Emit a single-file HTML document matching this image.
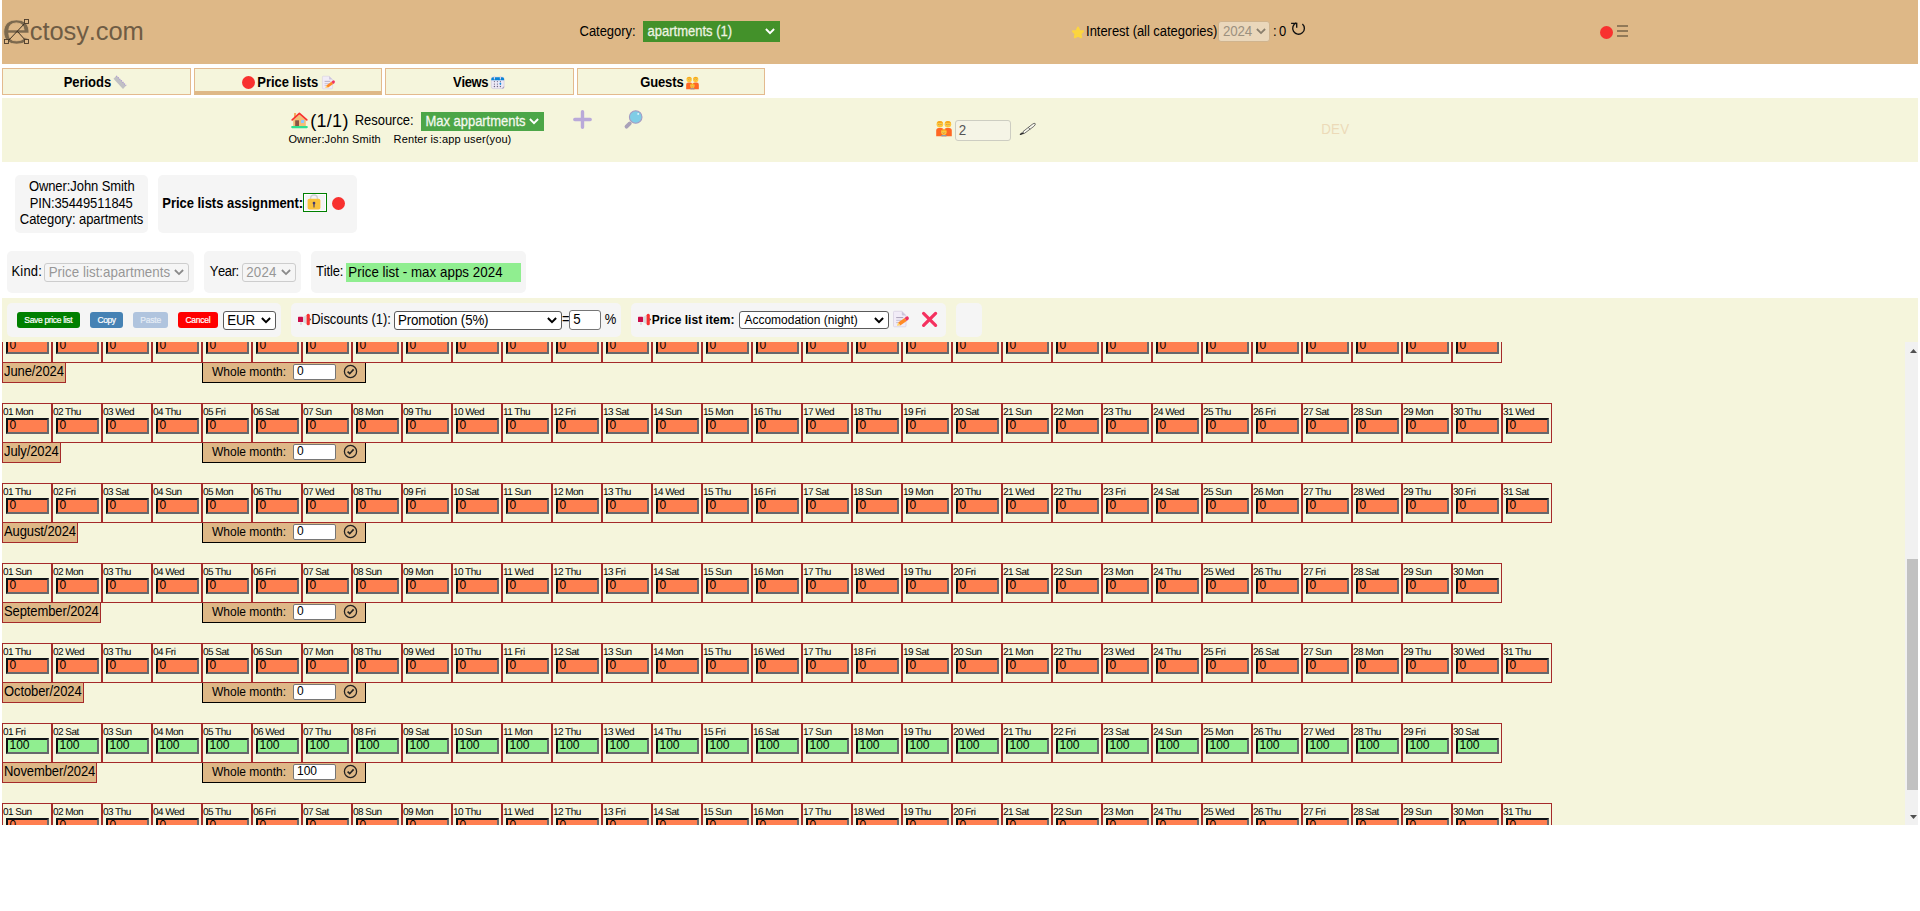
<!DOCTYPE html>
<html lang="en"><head><meta charset="utf-8"><title>ectosy.com - Price lists</title>
<style>
html,body{margin:0;padding:0;background:#fff;}
body{width:1920px;height:911px;overflow:hidden;position:relative;font-family:"Liberation Sans",Arial,sans-serif;font-size:13px;color:#000;}
.b{position:absolute;box-sizing:border-box;}
.t{position:absolute;white-space:pre;display:block;}
svg{position:absolute;overflow:visible;}
#scroll{position:absolute;left:2px;top:342px;width:1916px;height:483px;overflow:hidden;background:#f5f5dc;}
.row{position:absolute;left:0;height:61px;width:1600px;}
.c{position:absolute;top:0;width:50px;height:40px;box-sizing:border-box;border:1px solid #a52a2a;}
.c b{position:absolute;left:-0.1px;top:3px;font-weight:normal;font-size:10px;line-height:11px;letter-spacing:-0.52px;text-rendering:geometricPrecision;white-space:pre;}
.c i{position:absolute;left:3px;top:14px;width:43px;height:16px;box-sizing:border-box;border:2px solid;border-color:#0d1114 #66686c #66686c #0d1114;background:#ff7f50;font-style:normal;font-size:12px;line-height:11px;padding-left:1.5px;overflow:hidden;white-space:pre;}
.c.g i{background:#90ee90;}
.ml{position:absolute;left:0;top:39px;height:21px;box-sizing:border-box;border:1px solid #a52a2a;background:#deb887;font-size:13px;line-height:18px;padding:0 1px 0 1px;letter-spacing:-0.1px;white-space:pre;}
.ml span{display:inline-block;transform:scaleY(1.075);transform-origin:0 13.5px;}
.wm{position:absolute;left:200px;top:40px;width:164px;height:20px;box-sizing:border-box;border:1px solid #000;border-top:none;background:#deb887;}
.wm .l{position:absolute;left:9px;top:2px;font-size:12px;line-height:14px;white-space:pre;}
.wm .v{position:absolute;left:90px;top:1px;width:43px;height:16px;box-sizing:border-box;border:1px solid #767676;border-radius:2px;background:#fff;font-size:12px;line-height:13px;padding-left:3px;white-space:pre;overflow:hidden;}
.wm svg{left:140px;top:1px;}
</style></head><body>

<div class="b" style="left:2px;top:0px;width:1916px;height:64px;background:#deb887;"></div>
<svg style="left:3px;top:18px" width="30" height="30" viewBox="0 0 30 30">
<text transform="translate(-1.45 25.5) scale(1.22 1)" font-family='"Liberation Sans",Arial,sans-serif' font-size="44" fill="#7c694e" stroke="#deb887" stroke-width="0.6">e</text>
<g stroke="#2a2118" stroke-width="0.9" fill="none"><path d="M4.5 23.5L23.5 3.5M14.5 13.5L23.5 23.5"/></g>
<g stroke="#4a3b2a" stroke-width="0.9" fill="#deb887"><rect x="21.5" y="1.5" width="4" height="4"/><rect x="1.5" y="21.5" width="4" height="4"/><rect x="21.5" y="21.5" width="4" height="4"/></g>
</svg>
<span class="t" style="top:17px;font-size:25.5px;line-height:28px;height:28px;color:#6f5c44;left:29.72px;letter-spacing:-0.089px;font-kerning:none;">ctosy.com</span>
<span class="t" style="top:24px;font-size:13px;line-height:15px;height:15px;color:#000;left:579.59px;transform:scaleY(1.075);transform-origin:0 12px;letter-spacing:-0.045px;font-kerning:none;">Category:</span>
<div class="b" style="left:643px;top:21px;width:137px;height:21px;background:#43912a;"></div>
<span class="t" style="top:24px;font-size:13px;line-height:15px;height:15px;color:#eef4e2;left:647.55px;transform:scaleY(1.075);transform-origin:0 12px;-webkit-text-stroke:0.25px #eef4e2;letter-spacing:-0.002px;font-kerning:none;">apartments (1)</span>
<svg style="left:765px;top:28px" width="10" height="7" viewBox="0 0 10 7"><path d="M0.9 1L5 5.1L9.1 1" fill="none" stroke="#fff" stroke-width="1.9"/></svg>
<svg style="left:1071px;top:26px" width="14" height="13" viewBox="0 0 14 13"><path d="M7 1.6L8.5 4.9L12.1 5.3L9.5 7.8L10.2 11.3L7 9.6L3.8 11.3L4.5 7.8L1.9 5.3L5.5 4.9Z" fill="#fcd53f" stroke="#fcd53f" stroke-width="2" stroke-linejoin="round"/></svg>
<span class="t" style="top:24px;font-size:13px;line-height:15px;height:15px;color:#000;left:1086.1px;transform:scaleY(1.075);transform-origin:0 12px;letter-spacing:-0.046px;font-kerning:none;">Interest (all categories)</span>
<div class="b" style="left:1218px;top:21px;width:52px;height:21px;background:#ead7bb;border:1px solid #d0b48e;border-radius:3px;"></div>
<span class="t" style="top:24px;font-size:13.33px;line-height:15px;height:15px;color:#9c917f;left:1222.93px;transform:scaleY(1.05);transform-origin:0 12px;letter-spacing:-0.164px;font-kerning:none;">2024</span>
<svg style="left:1256px;top:28px" width="10" height="7" viewBox="0 0 10 7"><path d="M0.9 1L5 5.1L9.1 1" fill="none" stroke="#8a7f6d" stroke-width="1.8"/></svg>
<span class="t" style="top:24px;font-size:13px;line-height:15px;height:15px;color:#000;left:1273.01px;transform:scaleY(1.075);transform-origin:0 12px;letter-spacing:0.762px;font-kerning:none;">:</span>
<span class="t" style="top:24px;font-size:13px;line-height:15px;height:15px;color:#000;left:1279.09px;transform:scaleY(1.075);transform-origin:0 12px;letter-spacing:0.086px;font-kerning:none;">0</span>
<svg style="left:1290px;top:22px" width="17" height="15" viewBox="0 0 17 15"><path d="M12.4 1.95A5.85 5.85 0 1 1 6.3 0.95" fill="none" stroke="#111" stroke-width="1.35"/><path d="M1.1 1.4H6.7V5.8" fill="none" stroke="#111" stroke-width="1.35"/></svg>
<div class="b" style="left:1600px;top:26px;width:13px;height:13px;background:#f8312f;border-radius:50%;"></div>
<div class="b" style="left:1617px;top:25px;width:11px;height:2px;background:#917958;"></div>
<div class="b" style="left:1617px;top:30px;width:11px;height:2px;background:#917958;"></div>
<div class="b" style="left:1617px;top:35px;width:11px;height:2px;background:#917958;"></div>
<div class="b" style="left:2px;top:68px;width:189px;height:27px;background:#f5f5dc;border:1px solid #e3ba8e;"></div>
<div class="b" style="left:194px;top:68px;width:188px;height:27px;background:#f5f5dc;border:1px solid #e3ba8e;border-bottom:4px solid #deb887;"></div>
<div class="b" style="left:385px;top:68px;width:189px;height:27px;background:#f5f5dc;border:1px solid #e3ba8e;"></div>
<div class="b" style="left:577px;top:68px;width:188px;height:27px;background:#f5f5dc;border:1px solid #e3ba8e;"></div>
<span class="t" style="top:75px;font-size:13px;line-height:15px;height:15px;color:#000;font-weight:bold;left:63.63px;transform:scaleY(1.075);transform-origin:0 12px;letter-spacing:-0.030px;font-kerning:none;">Periods</span>
<svg style="left:112px;top:74px" width="16" height="16" viewBox="0 0 16 16"><path d="M4.4 1.8L14.2 11.5L11 15L1.5 4.7Z" fill="#c0c0c4"/><path d="M4.4 1.8L14.2 11.5" stroke="#a98fd4" stroke-width="1.1" stroke-dasharray="1.1 1.1"/></svg>
<div class="b" style="left:242px;top:76px;width:13px;height:13px;background:#f8312f;border-radius:50%;"></div>
<span class="t" style="top:75px;font-size:13px;line-height:15px;height:15px;color:#000;font-weight:bold;left:257.33px;transform:scaleY(1.075);transform-origin:0 12px;letter-spacing:-0.062px;font-kerning:none;">Price lists</span>
<svg style="left:321.8px;top:76px" width="13" height="13" viewBox="0 0 16 16"><path d="M0.5 1.2Q0.5 0.3 1.4 0.3H8.8L13 4.4V15Q13 15.8 12.2 15.8H1.4Q0.5 15.8 0.5 15Z" fill="#f1ecf7" stroke="#d6cfe1" stroke-width="0.7"/><path d="M8.8 0.3V3.6Q8.8 4.4 9.6 4.4H13Z" fill="#cdc5db"/><path d="M3.2 6.6H10.2" stroke="#a9a0b8" stroke-width="1"/><path d="M3.2 9.3H8.6M3.2 11.6H5.8" stroke="#c4bcd2" stroke-width="1"/><path d="M5.2 11.6L11.6 7L13.7 9.9L7.2 14.4Z" fill="#ff8a26"/><path d="M3.9 14.8L5.2 11.6L7.2 14.4Z" fill="#ffd46a"/><path d="M11.6 7L13.2 5.7Q14.6 4.8 15.6 6.3Q16.4 7.8 15.2 8.8L13.7 9.9Z" fill="#f0325f"/></svg>
<span class="t" style="top:75px;font-size:13px;line-height:15px;height:15px;color:#000;font-weight:bold;left:453.11px;transform:scaleY(1.075);transform-origin:0 12px;letter-spacing:-0.358px;font-kerning:none;">Views</span>
<svg style="left:491px;top:76px" width="14" height="13" viewBox="0 0 14 13"><rect x="0.3" y="1.2" width="12.8" height="11.4" rx="1.8" fill="#ece8f5" stroke="#cbc5da" stroke-width="0.6"/><path d="M0.3 3A1.8 1.8 0 0 1 2.1 1.2H11.3A1.8 1.8 0 0 1 13.1 3V4.3H0.3Z" fill="#0a84d6"/><path d="M3.4 0.2V2.9M9.4 0.2V2.9" stroke="#ddd6ea" stroke-width="1.1" stroke-linecap="round"/><g fill="#6c6480"><circle cx="3.4" cy="5.6" r="0.6"/><circle cx="6.4" cy="5.6" r="0.6"/><circle cx="9.4" cy="5.6" r="0.6"/><circle cx="3.4" cy="8.1" r="0.6"/><circle cx="6.4" cy="8.1" r="0.6"/><circle cx="3.4" cy="10.5" r="0.7"/><circle cx="6.4" cy="10.5" r="0.7"/><circle cx="9.4" cy="10.5" r="0.7"/></g><rect x="8.7" y="6.6" width="1.4" height="2.4" rx="0.7" fill="#1c8fe0"/><path d="M10.6 12.6L13.1 10.2V11A1.6 1.6 0 0 1 11.5 12.6Z" fill="#a69cbc"/></svg>
<span class="t" style="top:75px;font-size:13px;line-height:15px;height:15px;color:#000;font-weight:bold;left:640.17px;transform:scaleY(1.075);transform-origin:0 12px;letter-spacing:-0.121px;font-kerning:none;">Guests</span>
<svg style="left:686px;top:76px" width="13" height="13.4" viewBox="0 0 16 16.4"><path d="M0.2 16.2V10.6A2.6 2.6 0 0 1 2.8 8H5.2A2.6 2.6 0 0 1 7.8 10.6V16.2Z" fill="#ff6723"/><path d="M8.2 16.2V10.6A2.6 2.6 0 0 1 10.8 8H13.2A2.6 2.6 0 0 1 15.8 10.6V16.2Z" fill="#ff6723"/><rect x="6" y="10" width="4" height="6.2" fill="#ff6723"/><circle cx="3.9" cy="4.3" r="3.3" fill="#ffc83d"/><circle cx="11.9" cy="4.3" r="3.3" fill="#ffc83d"/><path d="M0.75 3.4A3.3 3.3 0 0 1 7.05 3.4Q5.5 2.5 3.9 3Q2.3 2.5 0.75 3.4Z" fill="#f5a31a"/><path d="M8.75 3.4A3.3 3.3 0 0 1 15.05 3.4Q13.5 2.5 11.9 3Q10.3 2.5 8.75 3.4Z" fill="#f5a31a"/><circle cx="7.9" cy="12.1" r="2.8" fill="#ffc83d"/><path d="M5.3 11.2A2.8 2.8 0 0 1 10.5 11.2Q7.9 9.9 5.3 11.2Z" fill="#f5a31a"/><path d="M5 16.3Q5 14.9 6.4 14.9H9.4Q10.8 14.9 10.8 16.3Z" fill="#8a9bb0"/><g fill="#8f8272"><circle cx="2.9" cy="4.5" r="0.5"/><circle cx="5" cy="4.5" r="0.5"/><circle cx="10.9" cy="4.5" r="0.5"/><circle cx="13" cy="4.5" r="0.5"/><circle cx="6.9" cy="12.2" r="0.45"/><circle cx="8.9" cy="12.2" r="0.45"/></g><circle cx="7.9" cy="13.5" r="0.5" fill="#d4453a"/><circle cx="3.9" cy="6.1" r="0.45" fill="#e8842c"/><circle cx="11.9" cy="6.1" r="0.45" fill="#e8842c"/></svg>
<div class="b" style="left:2px;top:98px;width:1916px;height:64px;background:#f5f5dc;"></div>
<svg style="left:291px;top:112px" width="17" height="17" viewBox="0 0 17 17"><rect x="3" y="1" width="2.1" height="4.4" rx="0.3" fill="#f3ad61"/><path d="M2.2 8L8.4 2.2L14.8 8V14.4H2.2Z" fill="#f3be78"/><path d="M1.2 7.9L8.4 1.3L15.8 7.9" fill="none" stroke="#f8312f" stroke-width="1.7" stroke-linecap="round" stroke-linejoin="round"/><rect x="4.2" y="8.3" width="3.8" height="6" fill="#8c5543"/><rect x="10" y="8" width="3.1" height="3.1" rx="0.4" fill="#8cc8ff"/><path d="M1.2 15.1H15.8" stroke="#2fe08f" stroke-width="2.1" stroke-linecap="round"/></svg>
<span class="t" style="top:111px;font-size:18px;line-height:20px;height:20px;color:#000;left:310.28px;letter-spacing:0.280px;font-kerning:none;">(1/1)</span>
<span class="t" style="top:113px;font-size:13px;line-height:15px;height:15px;color:#000;left:354.63px;transform:scaleY(1.075);transform-origin:0 12px;letter-spacing:-0.024px;font-kerning:none;">Resource:</span>
<div class="b" style="left:421px;top:112px;width:123px;height:19px;background:#4ca648;"></div>
<span class="t" style="top:114px;font-size:13px;line-height:15px;height:15px;color:#f4f8ee;left:425.53px;transform:scaleY(1.075);transform-origin:0 12px;-webkit-text-stroke:0.25px #f4f8ee;letter-spacing:-0.035px;font-kerning:none;">Max appartments</span>
<svg style="left:529px;top:118px" width="10" height="7" viewBox="0 0 10 7"><path d="M0.9 1L5 5.1L9.1 1" fill="none" stroke="#fff" stroke-width="1.9"/></svg>
<span class="t" style="top:133px;font-size:11px;line-height:12px;height:12px;color:#000;left:288.38px;letter-spacing:0.124px;font-kerning:none;">Owner:John Smith</span>
<span class="t" style="top:133px;font-size:11px;line-height:12px;height:12px;color:#000;left:393.6px;letter-spacing:0.125px;font-kerning:none;">Renter is:app user(you)</span>
<svg style="left:573px;top:110px" width="19" height="19" viewBox="0 0 19 19"><path d="M9.5 1.8V17.2M1.8 9.5H17.2" stroke="#b9a9d9" stroke-width="3.4" stroke-linecap="round"/></svg>
<svg style="left:624px;top:109px" width="20" height="20" viewBox="0 0 20 20"><path d="M2.5 17.7L5.8 14.4" stroke="#a9a1b8" stroke-width="3.8" stroke-linecap="round"/><circle cx="11.7" cy="8" r="6.3" fill="#7fcde6" stroke="#a79bc2" stroke-width="1.1"/><circle cx="14.2" cy="4.9" r="0.9" fill="#e8f7fc"/></svg>
<svg style="left:936.4px;top:120px" width="16" height="16.4" viewBox="0 0 16 16.4"><path d="M0.2 16.2V10.6A2.6 2.6 0 0 1 2.8 8H5.2A2.6 2.6 0 0 1 7.8 10.6V16.2Z" fill="#ff6723"/><path d="M8.2 16.2V10.6A2.6 2.6 0 0 1 10.8 8H13.2A2.6 2.6 0 0 1 15.8 10.6V16.2Z" fill="#ff6723"/><rect x="6" y="10" width="4" height="6.2" fill="#ff6723"/><circle cx="3.9" cy="4.3" r="3.3" fill="#ffc83d"/><circle cx="11.9" cy="4.3" r="3.3" fill="#ffc83d"/><path d="M0.75 3.4A3.3 3.3 0 0 1 7.05 3.4Q5.5 2.5 3.9 3Q2.3 2.5 0.75 3.4Z" fill="#f5a31a"/><path d="M8.75 3.4A3.3 3.3 0 0 1 15.05 3.4Q13.5 2.5 11.9 3Q10.3 2.5 8.75 3.4Z" fill="#f5a31a"/><circle cx="7.9" cy="12.1" r="2.8" fill="#ffc83d"/><path d="M5.3 11.2A2.8 2.8 0 0 1 10.5 11.2Q7.9 9.9 5.3 11.2Z" fill="#f5a31a"/><path d="M5 16.3Q5 14.9 6.4 14.9H9.4Q10.8 14.9 10.8 16.3Z" fill="#8a9bb0"/><g fill="#8f8272"><circle cx="2.9" cy="4.5" r="0.5"/><circle cx="5" cy="4.5" r="0.5"/><circle cx="10.9" cy="4.5" r="0.5"/><circle cx="13" cy="4.5" r="0.5"/><circle cx="6.9" cy="12.2" r="0.45"/><circle cx="8.9" cy="12.2" r="0.45"/></g><circle cx="7.9" cy="13.5" r="0.5" fill="#d4453a"/><circle cx="3.9" cy="6.1" r="0.45" fill="#e8842c"/><circle cx="11.9" cy="6.1" r="0.45" fill="#e8842c"/></svg>
<div class="b" style="left:955px;top:120px;width:56px;height:21px;background:#f5f4e6;border:1px solid #cdcdc2;border-radius:3px;"></div>
<span class="t" style="top:123px;font-size:13.33px;line-height:15px;height:15px;color:#545454;left:958.83px;transform:scaleY(1.05);transform-origin:0 12px;letter-spacing:0.827px;font-kerning:none;">2</span>
<svg style="left:1019px;top:121px" width="18" height="16" viewBox="0 0 18 16"><path d="M1.1 13.5L4 10.6L13.2 3.4Q15.4 1.6 16.2 2.6Q16.8 3.6 14.8 5.4L5.4 12.4Z" fill="#fafaf0" stroke="#333" stroke-width="0.7" stroke-linejoin="round"/><path d="M1.1 13.5L4.8 11.8" stroke="#222" stroke-width="1.2"/><path d="M9.3 6.6L11.2 8.3" stroke="#333" stroke-width="0.7"/></svg>
<span class="t" style="top:122px;font-size:13.33px;line-height:15px;height:15px;color:#ecdab8;left:1321.31px;transform:scaleY(1.05);transform-origin:0 12px;letter-spacing:0.172px;font-kerning:none;">DEV</span>
<div class="b" style="left:15px;top:175px;width:133px;height:58px;background:#f5f5f5;border-radius:5px;"></div>
<span class="t" style="top:179px;font-size:13px;line-height:15px;height:15px;color:#000;left:28.88px;transform:scaleY(1.075);transform-origin:0 12px;letter-spacing:-0.078px;font-kerning:none;">Owner:John Smith</span>
<span class="t" style="top:196px;font-size:13px;line-height:15px;height:15px;color:#000;left:29.63px;transform:scaleY(1.075);transform-origin:0 12px;letter-spacing:-0.114px;font-kerning:none;">PIN:35449511845</span>
<span class="t" style="top:212px;font-size:13px;line-height:15px;height:15px;color:#000;left:19.84px;transform:scaleY(1.075);transform-origin:0 12px;letter-spacing:-0.078px;font-kerning:none;">Category: apartments</span>
<div class="b" style="left:158px;top:175px;width:199px;height:58px;background:#f5f5f5;border-radius:5px;"></div>
<span class="t" style="top:196px;font-size:13px;line-height:15px;height:15px;color:#000;font-weight:bold;left:162.33px;transform:scaleY(1.075);transform-origin:0 12px;letter-spacing:-0.036px;font-kerning:none;">Price lists assignment:</span>
<div class="b" style="left:303px;top:193px;width:24px;height:19px;background:#f4f3f5;border:1px solid #008000;box-shadow:inset 0 0 0 1px #fff;"></div>
<svg style="left:307.4px;top:193.4px" width="14" height="17" viewBox="0 0 14 17"><path d="M3.6 7V5.4A3.4 3.4 0 0 1 10.4 5.4V7" fill="none" stroke="#d0d0d4" stroke-width="1.3"/><rect x="0.6" y="5.7" width="12.8" height="10.9" rx="1.8" fill="#f9c23c"/><circle cx="7" cy="10" r="1.35" fill="#3f3a72"/><path d="M6.3 10.3H7.7L7.5 14.6H6.5Z" fill="#3f3a72"/></svg>
<div class="b" style="left:332px;top:197px;width:13px;height:13px;background:#f8312f;border-radius:50%;"></div>
<div class="b" style="left:7px;top:251px;width:187px;height:42px;background:#f5f5f5;border-radius:5px;"></div>
<span class="t" style="top:264px;font-size:13px;line-height:15px;height:15px;color:#000;left:11.53px;transform:scaleY(1.075);transform-origin:0 12px;letter-spacing:0.156px;font-kerning:none;">Kind:</span>
<div class="b" style="left:44px;top:263px;width:145px;height:19px;background:#f5f5f5;border:1px solid #cdcdcd;border-radius:3px;"></div>
<span class="t" style="top:265px;font-size:13.33px;line-height:15px;height:15px;color:#979797;left:48.71px;transform:scaleY(1.05);transform-origin:0 12px;letter-spacing:0.031px;font-kerning:none;">Price list:apartments</span>
<svg style="left:174.2px;top:269px" width="10" height="7" viewBox="0 0 10 7"><path d="M0.9 1L5 5.1L9.1 1" fill="none" stroke="#8a8a8a" stroke-width="1.8"/></svg>
<div class="b" style="left:204px;top:251px;width:97px;height:42px;background:#f5f5f5;border-radius:5px;"></div>
<span class="t" style="top:264px;font-size:13px;line-height:15px;height:15px;color:#000;left:209.71px;transform:scaleY(1.075);transform-origin:0 12px;letter-spacing:-0.400px;font-kerning:none;">Year:</span>
<div class="b" style="left:242px;top:263px;width:54px;height:19px;background:#f5f5f5;border:1px solid #cdcdcd;border-radius:3px;"></div>
<span class="t" style="top:265px;font-size:13.33px;line-height:15px;height:15px;color:#979797;left:246.23px;transform:scaleY(1.05);transform-origin:0 12px;letter-spacing:0.202px;font-kerning:none;">2024</span>
<svg style="left:281.2px;top:269px" width="10" height="7" viewBox="0 0 10 7"><path d="M0.9 1L5 5.1L9.1 1" fill="none" stroke="#8a8a8a" stroke-width="1.8"/></svg>
<div class="b" style="left:311px;top:251px;width:215px;height:42px;background:#f5f5f5;border-radius:5px;"></div>
<span class="t" style="top:264px;font-size:13px;line-height:15px;height:15px;color:#000;left:316.01px;transform:scaleY(1.075);transform-origin:0 12px;letter-spacing:-0.138px;font-kerning:none;">Title:</span>
<div class="b" style="left:346px;top:263px;width:175px;height:19px;background:#90ee90;"></div>
<span class="t" style="top:265px;font-size:13.33px;line-height:15px;height:15px;color:#000;left:348.31px;transform:scaleY(1.05);transform-origin:0 12px;letter-spacing:0.037px;font-kerning:none;">Price list - max apps 2024</span>
<div class="b" style="left:2px;top:298px;width:1916px;height:44px;background:#f5f5dc;"></div>
<div class="b" style="left:7px;top:303px;width:274px;height:34px;background:#f5f5f5;border-radius:5px;"></div>
<div class="b" style="left:17px;top:312px;width:63px;height:16px;background:#008000;border-radius:3px;"></div>
<span class="t" style="top:315px;font-size:8.5px;line-height:10px;height:10px;color:#fff;left:24.31px;-webkit-text-stroke:0.2px #fff;letter-spacing:-0.326px;font-kerning:none;">Save price list</span>
<div class="b" style="left:90px;top:312px;width:33px;height:16px;background:#4682b4;border-radius:3px;"></div>
<span class="t" style="top:315px;font-size:8.5px;line-height:10px;height:10px;color:#fff;left:97.47px;-webkit-text-stroke:0.2px #fff;letter-spacing:-0.465px;font-kerning:none;">Copy</span>
<div class="b" style="left:133px;top:312px;width:35px;height:16px;background:#b0c4de;border-radius:3px;"></div>
<span class="t" style="top:315px;font-size:8.5px;line-height:10px;height:10px;color:#e6edf6;left:140.2px;-webkit-text-stroke:0.2px #e6edf6;letter-spacing:-0.190px;font-kerning:none;">Paste</span>
<div class="b" style="left:178px;top:312px;width:40px;height:16px;background:#ff0000;border-radius:3px;"></div>
<span class="t" style="top:315px;font-size:8.5px;line-height:10px;height:10px;color:#fff;left:185.47px;-webkit-text-stroke:0.2px #fff;letter-spacing:-0.272px;font-kerning:none;">Cancel</span>
<div class="b" style="left:223px;top:311px;width:53px;height:19px;background:#fff;border:1px solid #5a5a5a;border-radius:3px;"></div>
<span class="t" style="top:313px;font-size:13.33px;line-height:15px;height:15px;color:#000;left:227.31px;transform:scaleY(1.05);transform-origin:0 12px;letter-spacing:-0.166px;font-kerning:none;">EUR</span>
<svg style="left:261px;top:317px" width="10" height="7" viewBox="0 0 10 7"><path d="M0.9 1L5 5.1L9.1 1" fill="none" stroke="#000" stroke-width="2"/></svg>
<div class="b" style="left:291px;top:303px;width:330px;height:34px;background:#f5f5f5;border-radius:5px;"></div>
<svg style="left:298px;top:314px" width="14" height="12" viewBox="0 0 14 12"><rect x="0" y="2.8" width="5" height="5.3" rx="0.6" fill="#ca0b4a"/><path d="M5 2.9L8.7 0.9V10.1L5 8Z" fill="#d9d9dc"/><rect x="2" y="8.2" width="2" height="2.6" rx="0.6" fill="#dcdcde"/><rect x="8.6" y="-0.2" width="3.2" height="11.4" rx="1.5" fill="#f92f2f"/><path d="M11.7 3.9L13.2 5.4L11.7 6.9Z" fill="#433b3b"/></svg>
<span class="t" style="top:312px;font-size:13px;line-height:15px;height:15px;color:#000;left:311.23px;transform:scaleY(1.075);transform-origin:0 12px;letter-spacing:-0.049px;font-kerning:none;">Discounts (1):</span>
<div class="b" style="left:394px;top:311px;width:168px;height:19px;background:#fff;border:1px solid #5a5a5a;border-radius:3px;"></div>
<span class="t" style="top:313px;font-size:13.33px;line-height:15px;height:15px;color:#000;left:398.01px;transform:scaleY(1.05);transform-origin:0 12px;letter-spacing:-0.160px;font-kerning:none;">Promotion (5%)</span>
<svg style="left:546.5px;top:317px" width="10" height="7" viewBox="0 0 10 7"><path d="M0.9 1L5 5.1L9.1 1" fill="none" stroke="#000" stroke-width="2"/></svg>
<span class="t" style="top:312px;font-size:13px;line-height:15px;height:15px;color:#000;left:562.07px;transform:scaleY(1.075);transform-origin:0 12px;letter-spacing:-0.316px;font-kerning:none;">=</span>
<div class="b" style="left:569px;top:310px;width:32px;height:20px;background:#fff;border:1px solid #767676;border-radius:3px;"></div>
<span class="t" style="top:312px;font-size:13.33px;line-height:15px;height:15px;color:#000;left:573.27px;transform:scaleY(1.05);transform-origin:0 12px;letter-spacing:0.080px;font-kerning:none;">5</span>
<span class="t" style="top:312px;font-size:13px;line-height:15px;height:15px;color:#000;left:604.64px;transform:scaleY(1.075);transform-origin:0 12px;letter-spacing:-0.432px;font-kerning:none;">%</span>
<div class="b" style="left:631px;top:303px;width:315px;height:34px;background:#f5f5f5;border-radius:5px;"></div>
<svg style="left:638px;top:314px" width="14" height="12" viewBox="0 0 14 12"><rect x="0" y="2.8" width="5" height="5.3" rx="0.6" fill="#ca0b4a"/><path d="M5 2.9L8.7 0.9V10.1L5 8Z" fill="#d9d9dc"/><rect x="2" y="8.2" width="2" height="2.6" rx="0.6" fill="#dcdcde"/><rect x="8.6" y="-0.2" width="3.2" height="11.4" rx="1.5" fill="#f92f2f"/><path d="M11.7 3.9L13.2 5.4L11.7 6.9Z" fill="#433b3b"/></svg>
<span class="t" style="top:313px;font-size:12px;line-height:14px;height:14px;color:#000;font-weight:bold;left:651.8px;letter-spacing:0.042px;font-kerning:none;">Price list item:</span>
<div class="b" style="left:739px;top:311px;width:150px;height:18px;background:#fff;border:1px solid #5a5a5a;border-radius:3px;"></div>
<span class="t" style="top:313px;font-size:12px;line-height:14px;height:14px;color:#000;left:744.38px;letter-spacing:0.004px;font-kerning:none;">Accomodation (night)</span>
<svg style="left:873.5px;top:316.5px" width="10" height="7" viewBox="0 0 10 7"><path d="M0.9 1L5 5.1L9.1 1" fill="none" stroke="#000" stroke-width="2"/></svg>
<svg style="left:893px;top:311px" width="16" height="16" viewBox="0 0 16 16"><path d="M0.5 1.2Q0.5 0.3 1.4 0.3H8.8L13 4.4V15Q13 15.8 12.2 15.8H1.4Q0.5 15.8 0.5 15Z" fill="#f1ecf7" stroke="#d6cfe1" stroke-width="0.7"/><path d="M8.8 0.3V3.6Q8.8 4.4 9.6 4.4H13Z" fill="#cdc5db"/><path d="M3.2 6.6H10.2" stroke="#a9a0b8" stroke-width="1"/><path d="M3.2 9.3H8.6M3.2 11.6H5.8" stroke="#c4bcd2" stroke-width="1"/><path d="M5.2 11.6L11.6 7L13.7 9.9L7.2 14.4Z" fill="#ff8a26"/><path d="M3.9 14.8L5.2 11.6L7.2 14.4Z" fill="#ffd46a"/><path d="M11.6 7L13.2 5.7Q14.6 4.8 15.6 6.3Q16.4 7.8 15.2 8.8L13.7 9.9Z" fill="#f0325f"/></svg>
<svg style="left:921px;top:311px" width="17" height="17" viewBox="0 0 17 17"><path d="M2.6 2.4L14.6 14.4M14.6 2.4L2.6 14.4" stroke="#f5315f" stroke-width="3.2" stroke-linecap="round"/></svg>
<div class="b" style="left:956px;top:303px;width:26px;height:34px;background:#f5f5f5;border-radius:5px;"></div>
<div id="scroll">
<div class="row" style="top:-19px">
<div class="c" style="left:0px"><b>01 Sat</b><i>0</i></div><div class="c" style="left:50px"><b>02 Sun</b><i>0</i></div><div class="c" style="left:100px"><b>03 Mon</b><i>0</i></div><div class="c" style="left:150px"><b>04 Thu</b><i>0</i></div><div class="c" style="left:200px"><b>05 Wed</b><i>0</i></div><div class="c" style="left:250px"><b>06 Thu</b><i>0</i></div><div class="c" style="left:300px"><b>07 Fri</b><i>0</i></div><div class="c" style="left:350px"><b>08 Sat</b><i>0</i></div><div class="c" style="left:400px"><b>09 Sun</b><i>0</i></div><div class="c" style="left:450px"><b>10 Mon</b><i>0</i></div><div class="c" style="left:500px"><b>11 Thu</b><i>0</i></div><div class="c" style="left:550px"><b>12 Wed</b><i>0</i></div><div class="c" style="left:600px"><b>13 Thu</b><i>0</i></div><div class="c" style="left:650px"><b>14 Fri</b><i>0</i></div><div class="c" style="left:700px"><b>15 Sat</b><i>0</i></div><div class="c" style="left:750px"><b>16 Sun</b><i>0</i></div><div class="c" style="left:800px"><b>17 Mon</b><i>0</i></div><div class="c" style="left:850px"><b>18 Thu</b><i>0</i></div><div class="c" style="left:900px"><b>19 Wed</b><i>0</i></div><div class="c" style="left:950px"><b>20 Thu</b><i>0</i></div><div class="c" style="left:1000px"><b>21 Fri</b><i>0</i></div><div class="c" style="left:1050px"><b>22 Sat</b><i>0</i></div><div class="c" style="left:1100px"><b>23 Sun</b><i>0</i></div><div class="c" style="left:1150px"><b>24 Mon</b><i>0</i></div><div class="c" style="left:1200px"><b>25 Thu</b><i>0</i></div><div class="c" style="left:1250px"><b>26 Wed</b><i>0</i></div><div class="c" style="left:1300px"><b>27 Thu</b><i>0</i></div><div class="c" style="left:1350px"><b>28 Fri</b><i>0</i></div><div class="c" style="left:1400px"><b>29 Sat</b><i>0</i></div><div class="c" style="left:1450px"><b>30 Sun</b><i>0</i></div>
<div class="ml"><span>June/2024</span></div>
<div class="wm"><span class="l">Whole month:</span><span class="v">0</span><svg width="15" height="15" viewBox="0 0 15 15"><circle cx="7.5" cy="7.5" r="6.1" fill="none" stroke="#222" stroke-width="1.3"/><path d="M4.6 7.7L6.7 9.7L10.6 5.4" fill="none" stroke="#222" stroke-width="1.6"/></svg></div>
</div>
<div class="row" style="top:61px">
<div class="c" style="left:0px"><b>01 Mon</b><i>0</i></div><div class="c" style="left:50px"><b>02 Thu</b><i>0</i></div><div class="c" style="left:100px"><b>03 Wed</b><i>0</i></div><div class="c" style="left:150px"><b>04 Thu</b><i>0</i></div><div class="c" style="left:200px"><b>05 Fri</b><i>0</i></div><div class="c" style="left:250px"><b>06 Sat</b><i>0</i></div><div class="c" style="left:300px"><b>07 Sun</b><i>0</i></div><div class="c" style="left:350px"><b>08 Mon</b><i>0</i></div><div class="c" style="left:400px"><b>09 Thu</b><i>0</i></div><div class="c" style="left:450px"><b>10 Wed</b><i>0</i></div><div class="c" style="left:500px"><b>11 Thu</b><i>0</i></div><div class="c" style="left:550px"><b>12 Fri</b><i>0</i></div><div class="c" style="left:600px"><b>13 Sat</b><i>0</i></div><div class="c" style="left:650px"><b>14 Sun</b><i>0</i></div><div class="c" style="left:700px"><b>15 Mon</b><i>0</i></div><div class="c" style="left:750px"><b>16 Thu</b><i>0</i></div><div class="c" style="left:800px"><b>17 Wed</b><i>0</i></div><div class="c" style="left:850px"><b>18 Thu</b><i>0</i></div><div class="c" style="left:900px"><b>19 Fri</b><i>0</i></div><div class="c" style="left:950px"><b>20 Sat</b><i>0</i></div><div class="c" style="left:1000px"><b>21 Sun</b><i>0</i></div><div class="c" style="left:1050px"><b>22 Mon</b><i>0</i></div><div class="c" style="left:1100px"><b>23 Thu</b><i>0</i></div><div class="c" style="left:1150px"><b>24 Wed</b><i>0</i></div><div class="c" style="left:1200px"><b>25 Thu</b><i>0</i></div><div class="c" style="left:1250px"><b>26 Fri</b><i>0</i></div><div class="c" style="left:1300px"><b>27 Sat</b><i>0</i></div><div class="c" style="left:1350px"><b>28 Sun</b><i>0</i></div><div class="c" style="left:1400px"><b>29 Mon</b><i>0</i></div><div class="c" style="left:1450px"><b>30 Thu</b><i>0</i></div><div class="c" style="left:1500px"><b>31 Wed</b><i>0</i></div>
<div class="ml"><span>July/2024</span></div>
<div class="wm"><span class="l">Whole month:</span><span class="v">0</span><svg width="15" height="15" viewBox="0 0 15 15"><circle cx="7.5" cy="7.5" r="6.1" fill="none" stroke="#222" stroke-width="1.3"/><path d="M4.6 7.7L6.7 9.7L10.6 5.4" fill="none" stroke="#222" stroke-width="1.6"/></svg></div>
</div>
<div class="row" style="top:141px">
<div class="c" style="left:0px"><b>01 Thu</b><i>0</i></div><div class="c" style="left:50px"><b>02 Fri</b><i>0</i></div><div class="c" style="left:100px"><b>03 Sat</b><i>0</i></div><div class="c" style="left:150px"><b>04 Sun</b><i>0</i></div><div class="c" style="left:200px"><b>05 Mon</b><i>0</i></div><div class="c" style="left:250px"><b>06 Thu</b><i>0</i></div><div class="c" style="left:300px"><b>07 Wed</b><i>0</i></div><div class="c" style="left:350px"><b>08 Thu</b><i>0</i></div><div class="c" style="left:400px"><b>09 Fri</b><i>0</i></div><div class="c" style="left:450px"><b>10 Sat</b><i>0</i></div><div class="c" style="left:500px"><b>11 Sun</b><i>0</i></div><div class="c" style="left:550px"><b>12 Mon</b><i>0</i></div><div class="c" style="left:600px"><b>13 Thu</b><i>0</i></div><div class="c" style="left:650px"><b>14 Wed</b><i>0</i></div><div class="c" style="left:700px"><b>15 Thu</b><i>0</i></div><div class="c" style="left:750px"><b>16 Fri</b><i>0</i></div><div class="c" style="left:800px"><b>17 Sat</b><i>0</i></div><div class="c" style="left:850px"><b>18 Sun</b><i>0</i></div><div class="c" style="left:900px"><b>19 Mon</b><i>0</i></div><div class="c" style="left:950px"><b>20 Thu</b><i>0</i></div><div class="c" style="left:1000px"><b>21 Wed</b><i>0</i></div><div class="c" style="left:1050px"><b>22 Thu</b><i>0</i></div><div class="c" style="left:1100px"><b>23 Fri</b><i>0</i></div><div class="c" style="left:1150px"><b>24 Sat</b><i>0</i></div><div class="c" style="left:1200px"><b>25 Sun</b><i>0</i></div><div class="c" style="left:1250px"><b>26 Mon</b><i>0</i></div><div class="c" style="left:1300px"><b>27 Thu</b><i>0</i></div><div class="c" style="left:1350px"><b>28 Wed</b><i>0</i></div><div class="c" style="left:1400px"><b>29 Thu</b><i>0</i></div><div class="c" style="left:1450px"><b>30 Fri</b><i>0</i></div><div class="c" style="left:1500px"><b>31 Sat</b><i>0</i></div>
<div class="ml"><span>August/2024</span></div>
<div class="wm"><span class="l">Whole month:</span><span class="v">0</span><svg width="15" height="15" viewBox="0 0 15 15"><circle cx="7.5" cy="7.5" r="6.1" fill="none" stroke="#222" stroke-width="1.3"/><path d="M4.6 7.7L6.7 9.7L10.6 5.4" fill="none" stroke="#222" stroke-width="1.6"/></svg></div>
</div>
<div class="row" style="top:221px">
<div class="c" style="left:0px"><b>01 Sun</b><i>0</i></div><div class="c" style="left:50px"><b>02 Mon</b><i>0</i></div><div class="c" style="left:100px"><b>03 Thu</b><i>0</i></div><div class="c" style="left:150px"><b>04 Wed</b><i>0</i></div><div class="c" style="left:200px"><b>05 Thu</b><i>0</i></div><div class="c" style="left:250px"><b>06 Fri</b><i>0</i></div><div class="c" style="left:300px"><b>07 Sat</b><i>0</i></div><div class="c" style="left:350px"><b>08 Sun</b><i>0</i></div><div class="c" style="left:400px"><b>09 Mon</b><i>0</i></div><div class="c" style="left:450px"><b>10 Thu</b><i>0</i></div><div class="c" style="left:500px"><b>11 Wed</b><i>0</i></div><div class="c" style="left:550px"><b>12 Thu</b><i>0</i></div><div class="c" style="left:600px"><b>13 Fri</b><i>0</i></div><div class="c" style="left:650px"><b>14 Sat</b><i>0</i></div><div class="c" style="left:700px"><b>15 Sun</b><i>0</i></div><div class="c" style="left:750px"><b>16 Mon</b><i>0</i></div><div class="c" style="left:800px"><b>17 Thu</b><i>0</i></div><div class="c" style="left:850px"><b>18 Wed</b><i>0</i></div><div class="c" style="left:900px"><b>19 Thu</b><i>0</i></div><div class="c" style="left:950px"><b>20 Fri</b><i>0</i></div><div class="c" style="left:1000px"><b>21 Sat</b><i>0</i></div><div class="c" style="left:1050px"><b>22 Sun</b><i>0</i></div><div class="c" style="left:1100px"><b>23 Mon</b><i>0</i></div><div class="c" style="left:1150px"><b>24 Thu</b><i>0</i></div><div class="c" style="left:1200px"><b>25 Wed</b><i>0</i></div><div class="c" style="left:1250px"><b>26 Thu</b><i>0</i></div><div class="c" style="left:1300px"><b>27 Fri</b><i>0</i></div><div class="c" style="left:1350px"><b>28 Sat</b><i>0</i></div><div class="c" style="left:1400px"><b>29 Sun</b><i>0</i></div><div class="c" style="left:1450px"><b>30 Mon</b><i>0</i></div>
<div class="ml"><span>September/2024</span></div>
<div class="wm"><span class="l">Whole month:</span><span class="v">0</span><svg width="15" height="15" viewBox="0 0 15 15"><circle cx="7.5" cy="7.5" r="6.1" fill="none" stroke="#222" stroke-width="1.3"/><path d="M4.6 7.7L6.7 9.7L10.6 5.4" fill="none" stroke="#222" stroke-width="1.6"/></svg></div>
</div>
<div class="row" style="top:301px">
<div class="c" style="left:0px"><b>01 Thu</b><i>0</i></div><div class="c" style="left:50px"><b>02 Wed</b><i>0</i></div><div class="c" style="left:100px"><b>03 Thu</b><i>0</i></div><div class="c" style="left:150px"><b>04 Fri</b><i>0</i></div><div class="c" style="left:200px"><b>05 Sat</b><i>0</i></div><div class="c" style="left:250px"><b>06 Sun</b><i>0</i></div><div class="c" style="left:300px"><b>07 Mon</b><i>0</i></div><div class="c" style="left:350px"><b>08 Thu</b><i>0</i></div><div class="c" style="left:400px"><b>09 Wed</b><i>0</i></div><div class="c" style="left:450px"><b>10 Thu</b><i>0</i></div><div class="c" style="left:500px"><b>11 Fri</b><i>0</i></div><div class="c" style="left:550px"><b>12 Sat</b><i>0</i></div><div class="c" style="left:600px"><b>13 Sun</b><i>0</i></div><div class="c" style="left:650px"><b>14 Mon</b><i>0</i></div><div class="c" style="left:700px"><b>15 Thu</b><i>0</i></div><div class="c" style="left:750px"><b>16 Wed</b><i>0</i></div><div class="c" style="left:800px"><b>17 Thu</b><i>0</i></div><div class="c" style="left:850px"><b>18 Fri</b><i>0</i></div><div class="c" style="left:900px"><b>19 Sat</b><i>0</i></div><div class="c" style="left:950px"><b>20 Sun</b><i>0</i></div><div class="c" style="left:1000px"><b>21 Mon</b><i>0</i></div><div class="c" style="left:1050px"><b>22 Thu</b><i>0</i></div><div class="c" style="left:1100px"><b>23 Wed</b><i>0</i></div><div class="c" style="left:1150px"><b>24 Thu</b><i>0</i></div><div class="c" style="left:1200px"><b>25 Fri</b><i>0</i></div><div class="c" style="left:1250px"><b>26 Sat</b><i>0</i></div><div class="c" style="left:1300px"><b>27 Sun</b><i>0</i></div><div class="c" style="left:1350px"><b>28 Mon</b><i>0</i></div><div class="c" style="left:1400px"><b>29 Thu</b><i>0</i></div><div class="c" style="left:1450px"><b>30 Wed</b><i>0</i></div><div class="c" style="left:1500px"><b>31 Thu</b><i>0</i></div>
<div class="ml"><span>October/2024</span></div>
<div class="wm"><span class="l">Whole month:</span><span class="v">0</span><svg width="15" height="15" viewBox="0 0 15 15"><circle cx="7.5" cy="7.5" r="6.1" fill="none" stroke="#222" stroke-width="1.3"/><path d="M4.6 7.7L6.7 9.7L10.6 5.4" fill="none" stroke="#222" stroke-width="1.6"/></svg></div>
</div>
<div class="row" style="top:381px">
<div class="c g" style="left:0px"><b>01 Fri</b><i>100</i></div><div class="c g" style="left:50px"><b>02 Sat</b><i>100</i></div><div class="c g" style="left:100px"><b>03 Sun</b><i>100</i></div><div class="c g" style="left:150px"><b>04 Mon</b><i>100</i></div><div class="c g" style="left:200px"><b>05 Thu</b><i>100</i></div><div class="c g" style="left:250px"><b>06 Wed</b><i>100</i></div><div class="c g" style="left:300px"><b>07 Thu</b><i>100</i></div><div class="c g" style="left:350px"><b>08 Fri</b><i>100</i></div><div class="c g" style="left:400px"><b>09 Sat</b><i>100</i></div><div class="c g" style="left:450px"><b>10 Sun</b><i>100</i></div><div class="c g" style="left:500px"><b>11 Mon</b><i>100</i></div><div class="c g" style="left:550px"><b>12 Thu</b><i>100</i></div><div class="c g" style="left:600px"><b>13 Wed</b><i>100</i></div><div class="c g" style="left:650px"><b>14 Thu</b><i>100</i></div><div class="c g" style="left:700px"><b>15 Fri</b><i>100</i></div><div class="c g" style="left:750px"><b>16 Sat</b><i>100</i></div><div class="c g" style="left:800px"><b>17 Sun</b><i>100</i></div><div class="c g" style="left:850px"><b>18 Mon</b><i>100</i></div><div class="c g" style="left:900px"><b>19 Thu</b><i>100</i></div><div class="c g" style="left:950px"><b>20 Wed</b><i>100</i></div><div class="c g" style="left:1000px"><b>21 Thu</b><i>100</i></div><div class="c g" style="left:1050px"><b>22 Fri</b><i>100</i></div><div class="c g" style="left:1100px"><b>23 Sat</b><i>100</i></div><div class="c g" style="left:1150px"><b>24 Sun</b><i>100</i></div><div class="c g" style="left:1200px"><b>25 Mon</b><i>100</i></div><div class="c g" style="left:1250px"><b>26 Thu</b><i>100</i></div><div class="c g" style="left:1300px"><b>27 Wed</b><i>100</i></div><div class="c g" style="left:1350px"><b>28 Thu</b><i>100</i></div><div class="c g" style="left:1400px"><b>29 Fri</b><i>100</i></div><div class="c g" style="left:1450px"><b>30 Sat</b><i>100</i></div>
<div class="ml"><span>November/2024</span></div>
<div class="wm"><span class="l">Whole month:</span><span class="v">100</span><svg width="15" height="15" viewBox="0 0 15 15"><circle cx="7.5" cy="7.5" r="6.1" fill="none" stroke="#222" stroke-width="1.3"/><path d="M4.6 7.7L6.7 9.7L10.6 5.4" fill="none" stroke="#222" stroke-width="1.6"/></svg></div>
</div>
<div class="row" style="top:461px">
<div class="c" style="left:0px"><b>01 Sun</b><i>0</i></div><div class="c" style="left:50px"><b>02 Mon</b><i>0</i></div><div class="c" style="left:100px"><b>03 Thu</b><i>0</i></div><div class="c" style="left:150px"><b>04 Wed</b><i>0</i></div><div class="c" style="left:200px"><b>05 Thu</b><i>0</i></div><div class="c" style="left:250px"><b>06 Fri</b><i>0</i></div><div class="c" style="left:300px"><b>07 Sat</b><i>0</i></div><div class="c" style="left:350px"><b>08 Sun</b><i>0</i></div><div class="c" style="left:400px"><b>09 Mon</b><i>0</i></div><div class="c" style="left:450px"><b>10 Thu</b><i>0</i></div><div class="c" style="left:500px"><b>11 Wed</b><i>0</i></div><div class="c" style="left:550px"><b>12 Thu</b><i>0</i></div><div class="c" style="left:600px"><b>13 Fri</b><i>0</i></div><div class="c" style="left:650px"><b>14 Sat</b><i>0</i></div><div class="c" style="left:700px"><b>15 Sun</b><i>0</i></div><div class="c" style="left:750px"><b>16 Mon</b><i>0</i></div><div class="c" style="left:800px"><b>17 Thu</b><i>0</i></div><div class="c" style="left:850px"><b>18 Wed</b><i>0</i></div><div class="c" style="left:900px"><b>19 Thu</b><i>0</i></div><div class="c" style="left:950px"><b>20 Fri</b><i>0</i></div><div class="c" style="left:1000px"><b>21 Sat</b><i>0</i></div><div class="c" style="left:1050px"><b>22 Sun</b><i>0</i></div><div class="c" style="left:1100px"><b>23 Mon</b><i>0</i></div><div class="c" style="left:1150px"><b>24 Thu</b><i>0</i></div><div class="c" style="left:1200px"><b>25 Wed</b><i>0</i></div><div class="c" style="left:1250px"><b>26 Thu</b><i>0</i></div><div class="c" style="left:1300px"><b>27 Fri</b><i>0</i></div><div class="c" style="left:1350px"><b>28 Sat</b><i>0</i></div><div class="c" style="left:1400px"><b>29 Sun</b><i>0</i></div><div class="c" style="left:1450px"><b>30 Mon</b><i>0</i></div><div class="c" style="left:1500px"><b>31 Thu</b><i>0</i></div>
<div class="ml"><span>December/2024</span></div>
<div class="wm"><span class="l">Whole month:</span><span class="v">0</span><svg width="15" height="15" viewBox="0 0 15 15"><circle cx="7.5" cy="7.5" r="6.1" fill="none" stroke="#222" stroke-width="1.3"/><path d="M4.6 7.7L6.7 9.7L10.6 5.4" fill="none" stroke="#222" stroke-width="1.6"/></svg></div>
</div>
<div class="b" style="left:1903px;top:0px;width:17px;height:483px;background:#f1f1f1;"></div>
<div class="b" style="left:1905px;top:217px;width:13px;height:231px;background:#c1c1c1;"></div>
<svg style="left:1908px;top:7px" width="7" height="4" viewBox="0 0 7 4"><path d="M0 4L3.5 0L7 4Z" fill="#505050"/></svg>
<svg style="left:1908px;top:473px" width="7" height="4" viewBox="0 0 7 4"><path d="M0 0L3.5 4L7 0Z" fill="#505050"/></svg>
</div>
</body></html>
